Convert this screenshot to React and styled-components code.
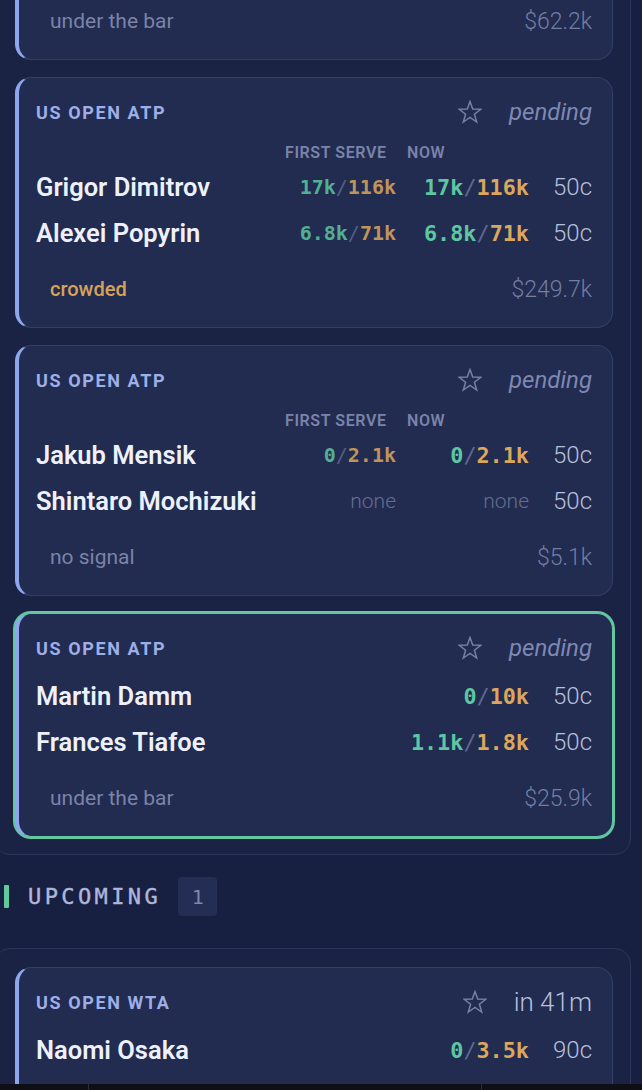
import React from "react";
import styled, { createGlobalStyle, css } from "styled-components";

const SANS = `"Roboto", "Liberation Sans", sans-serif`;
const MONO = `"DejaVu Sans Mono", "Liberation Mono", monospace`;

const GlobalStyle = createGlobalStyle`
  html, body {
    margin: 0;
    padding: 0;
    background: #182041;
    overflow: hidden;
  }
  * { box-sizing: border-box; }
`;

const Page = styled.div`
  margin-top: -185px;
  display: flex;
  flex-direction: column;
  font-family: ${SANS};
`;

const Panel = styled.section`
  margin-left: -6px;
  width: 637px;
  border: 1px solid #2c355b;
  border-radius: 16px;
  background: #1b2345;
  padding: ${(p) => (p.$top ? "18px" : "20px")} 17px 17px 20px;
  display: flex;
  flex-direction: column;
  gap: 17px;
`;

const Card = styled.article`
  position: relative;
  background: #222b50;
  border: 1px solid #343e68;
  border-left: 4px solid #8ea6ee;
  border-radius: 16px;
  padding: 22px 20px 23px 17px;
  display: flex;
  flex-direction: column;
  ${(p) =>
    p.$highlight &&
    css`
      border-top-color: #62c8a2;
      border-right-color: #62c8a2;
      border-bottom-color: #62c8a2;
      box-shadow: 0 0 0 2px #62c8a2;
    `}
`;

const CardHeader = styled.header`
  height: 24px;
  display: flex;
  align-items: center;
  justify-content: space-between;
`;

const League = styled.span`
  font-size: 18px;
  font-weight: 700;
  letter-spacing: 1.6px;
  color: #9eaee6;
`;

const HeaderRight = styled.div`
  display: flex;
  align-items: center;
  gap: 27px;
`;

const StarButton = styled.span`
  display: inline-flex;
  width: 24px;
  height: 24px;
  color: #7680a8;
`;

const Status = styled.span`
  font-size: ${(p) => (p.$time ? "26px" : "24px")};
  font-weight: ${(p) => (p.$time ? 300 : 400)};
  font-style: ${(p) => (p.$time ? "normal" : "italic")};
  color: ${(p) => (p.$time ? "#b8c0dc" : "#7d88b2")};
`;

const Rows = styled.div`
  margin-top: 13px;
  display: flex;
  flex-direction: column;
`;

const grid = css`
  display: grid;
  grid-template-columns: minmax(0, 1fr) 111px 122px 52px;
  column-gap: 11px;
  align-items: center;
`;

const ColHeader = styled.div`
  ${grid};
  height: 16px;
  margin: 8px 0 3px;
  font-size: 16px;
  font-weight: 600;
  letter-spacing: 0.6px;
  color: #7a84aa;
  line-height: 16px;
`;

const Row = styled.div`
  ${grid};
  height: 46px;
`;

const Name = styled.span`
  font-size: 25.5px;
  font-weight: 600;
  color: #eef1fb;
  white-space: nowrap;
`;

const Cell = styled.span`
  justify-self: end;
  font-family: ${MONO};
  font-weight: 700;
  font-size: ${(p) => (p.$first ? "20px" : "21.8px")};
  opacity: ${(p) => (p.$first ? 0.85 : 1)};
  white-space: nowrap;
`;

const Num = styled.span`
  color: ${(p) => (p.$tone === "green" ? "#5cc7a1" : "#dba75c")};
`;

const Slash = styled.span`
  color: #5e688f;
  font-weight: 400;
`;

const NoneText = styled.span`
  justify-self: end;
  font-family: ${SANS};
  font-size: 21px;
  font-weight: 300;
  color: #646e93;
`;

const Price = styled.span`
  justify-self: end;
  font-size: 24px;
  font-weight: 300;
  color: #b8c0dc;
`;

const Footer = styled.footer`
  margin-top: 18px;
  height: 30px;
  padding-left: 14px;
  display: flex;
  align-items: center;
  justify-content: space-between;
`;

const Signal = styled.span`
  font-size: ${(p) => (p.$tone === "warn" ? "20px" : "21px")};
  font-weight: ${(p) => (p.$tone === "warn" ? 500 : 400)};
  color: ${(p) => (p.$tone === "warn" ? "#d6a35b" : "#7a84a8")};
`;

const Money = styled.span`
  font-size: 23px;
  font-weight: 300;
  color: #737ea4;
`;

const SectionHeader = styled.div`
  margin: 22px 0 32px;
  height: 39px;
  padding-left: 4px;
  display: flex;
  align-items: center;
`;

const SectionBar = styled.span`
  width: 5px;
  height: 23px;
  border-radius: 1px;
  background: #5fca9c;
`;

const SectionTitle = styled.span`
  margin-left: 19px;
  font-family: ${MONO};
  font-size: 22px;
  font-weight: 400;
  letter-spacing: 3.4px;
  color: #aeb7da;
  -webkit-text-stroke: 0.4px #aeb7da;
`;

const CountBadge = styled.span`
  margin-left: 17px;
  width: 39px;
  height: 39px;
  border-radius: 4px;
  background: #242d53;
  display: flex;
  align-items: center;
  justify-content: center;
  font-family: ${MONO};
  font-size: 20px;
  color: #7d87ad;
`;

const BottomStrip = styled.div`
  position: fixed;
  left: 0;
  right: 0;
  bottom: 0;
  height: 6px;
  background: #0d0f15;
  display: flex;
`;

const StripSeg = styled.span`
  width: ${(p) => p.$w}px;
  border-right: 1px solid #2a2d36;
`;

const Star = () => (
  <StarButton>
    <svg width="24" height="24" viewBox="0 0 24 24" fill="none">
      <polygon
        points="12,1.6 14.7,9.1 22.8,9.3 16.4,14.2 18.7,22 12,17.4 5.3,22 7.6,14.2 1.2,9.3 9.3,9.1"
        stroke="currentColor"
        strokeWidth="1.5"
        strokeLinejoin="miter"
      />
    </svg>
  </StarButton>
);

const Ratio = ({ value, first }) =>
  value ? (
    <Cell $first={first}>
      <Num $tone="green">{value[0]}</Num>
      <Slash>/</Slash>
      <Num $tone="amber">{value[1]}</Num>
    </Cell>
  ) : (
    <NoneText>none</NoneText>
  );

const MatchCard = ({ m }) => (
  <Card $highlight={m.highlight}>
    <CardHeader>
      <League>{m.league}</League>
      <HeaderRight>
        <Star />
        <Status $time={m.time}>{m.status}</Status>
      </HeaderRight>
    </CardHeader>
    <Rows>
      {m.showFirst && (
        <ColHeader>
          <span />
          <span>FIRST SERVE</span>
          <span>NOW</span>
        </ColHeader>
      )}
      {m.players.map((p) => (
        <Row key={p.name}>
          <Name>{p.name}</Name>
          {m.showFirst ? <Ratio value={p.first} first /> : <span />}
          <Ratio value={p.now} />
          <Price>{p.price}</Price>
        </Row>
      ))}
    </Rows>
    <Footer>
      <Signal $tone={m.tone}>{m.signal}</Signal>
      <Money>{m.money}</Money>
    </Footer>
  </Card>
);

const live = [
  {
    league: "US OPEN ATP",
    status: "pending",
    players: [
      { name: "Lorenzo Musetti", now: ["2.4k", "18k"], price: "50c" },
      { name: "Tomas Machac", now: ["1.2k", "9.6k"], price: "50c" },
    ],
    signal: "under the bar",
    money: "$62.2k",
  },
  {
    league: "US OPEN ATP",
    status: "pending",
    showFirst: true,
    players: [
      { name: "Grigor Dimitrov", first: ["17k", "116k"], now: ["17k", "116k"], price: "50c" },
      { name: "Alexei Popyrin", first: ["6.8k", "71k"], now: ["6.8k", "71k"], price: "50c" },
    ],
    signal: "crowded",
    tone: "warn",
    money: "$249.7k",
  },
  {
    league: "US OPEN ATP",
    status: "pending",
    showFirst: true,
    players: [
      { name: "Jakub Mensik", first: ["0", "2.1k"], now: ["0", "2.1k"], price: "50c" },
      { name: "Shintaro Mochizuki", first: null, now: null, price: "50c" },
    ],
    signal: "no signal",
    money: "$5.1k",
  },
  {
    league: "US OPEN ATP",
    status: "pending",
    highlight: true,
    players: [
      { name: "Martin Damm", now: ["0", "10k"], price: "50c" },
      { name: "Frances Tiafoe", now: ["1.1k", "1.8k"], price: "50c" },
    ],
    signal: "under the bar",
    money: "$25.9k",
  },
];

const upcoming = [
  {
    league: "US OPEN WTA",
    status: "in 41m",
    time: true,
    players: [
      { name: "Naomi Osaka", now: ["0", "3.5k"], price: "90c" },
      { name: "Hailey Baptiste", now: ["0", "410"], price: "10c" },
    ],
    signal: "under the bar",
    money: "$3.9k",
  },
];

export default function App() {
  return (
    <>
      <GlobalStyle />
      <Page>
        <Panel>
          {live.map((m, i) => (
            <MatchCard key={i} m={m} />
          ))}
        </Panel>
        <SectionHeader>
          <SectionBar />
          <SectionTitle>UPCOMING</SectionTitle>
          <CountBadge>1</CountBadge>
        </SectionHeader>
        <Panel $top>
          {upcoming.map((m, i) => (
            <MatchCard key={i} m={m} />
          ))}
        </Panel>
      </Page>
      <BottomStrip>
        <StripSeg $w={89} />
        <StripSeg $w={393} />
      </BottomStrip>
    </>
  );
}
